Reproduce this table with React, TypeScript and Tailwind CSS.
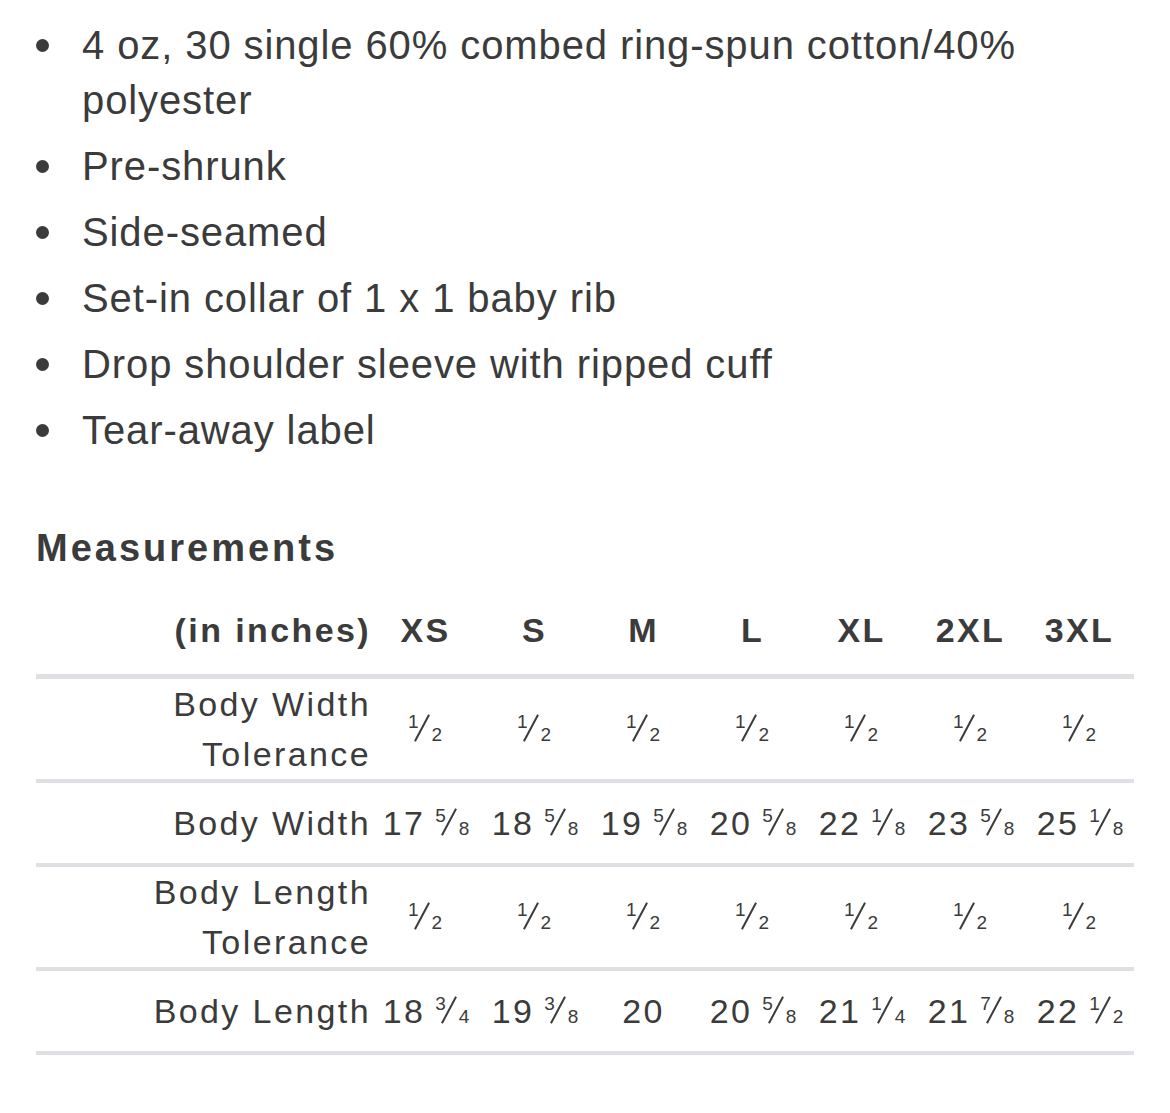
import React from "react";

const bullets = [
  "4 oz, 30 single 60% combed ring-spun cotton/40% polyester",
  "Pre-shrunk",
  "Side-seamed",
  "Set-in collar of 1 x 1 baby rib",
  "Drop shoulder sleeve with ripped cuff",
  "Tear-away label",
];

const sizes = ["XS", "S", "M", "L", "XL", "2XL", "3XL"];

type Val = { whole?: string; n?: string; d?: string };

const half: Val = { n: "1", d: "2" };

const rows: { label: string[]; values: Val[]; tall: boolean }[] = [
  {
    label: ["Body Width", "Tolerance"],
    values: [half, half, half, half, half, half, half],
    tall: true,
  },
  {
    label: ["Body Width"],
    values: [
      { whole: "17", n: "5", d: "8" },
      { whole: "18", n: "5", d: "8" },
      { whole: "19", n: "5", d: "8" },
      { whole: "20", n: "5", d: "8" },
      { whole: "22", n: "1", d: "8" },
      { whole: "23", n: "5", d: "8" },
      { whole: "25", n: "1", d: "8" },
    ],
    tall: false,
  },
  {
    label: ["Body Length", "Tolerance"],
    values: [half, half, half, half, half, half, half],
    tall: true,
  },
  {
    label: ["Body Length"],
    values: [
      { whole: "18", n: "3", d: "4" },
      { whole: "19", n: "3", d: "8" },
      { whole: "20" },
      { whole: "20", n: "5", d: "8" },
      { whole: "21", n: "1", d: "4" },
      { whole: "21", n: "7", d: "8" },
      { whole: "22", n: "1", d: "2" },
    ],
    tall: false,
  },
];

function Frac({ n, d }: { n: string; d: string }) {
  return (
    <span className="relative inline-block w-[31px] h-[26px] align-baseline tracking-normal">
      <span className="absolute left-[-2px] top-[-3px] text-[19px] leading-none">{n}</span>
      <span className="absolute left-[11px] top-[-2px] w-[2px] h-[30px] bg-[#3b3b3b] rotate-[28deg]" />
      <span className="absolute right-[-1px] bottom-[-3px] text-[19px] leading-none">{d}</span>
    </span>
  );
}

function Value({ v }: { v: Val }) {
  return (
    <span className="whitespace-nowrap">
      {v.whole}
      {v.whole && v.n ? " " : ""}
      {v.n && v.d ? <Frac n={v.n} d={v.d} /> : null}
    </span>
  );
}

export default function App() {
  return (
    <div
      className="w-full h-[1113px] bg-white px-[36px] text-[#3b3b3b] overflow-hidden"
      style={{ fontFamily: '"Liberation Sans", Arial, Helvetica, sans-serif' }}
    >
      <ul className="pt-[18px] flex flex-col gap-[11px]">
        {bullets.map((b) => (
          <li key={b} className="flex text-[40px] leading-[55px] tracking-[0.9px]">
            <span className="w-[46px] h-[55px] shrink-0 flex items-center">
              <span className="block w-[13px] h-[13px] rounded-full bg-[#3b3b3b]" />
            </span>
            <span>{b}</span>
          </li>
        ))}
      </ul>

      <h2 className="mt-[65px] h-[50px] leading-[50px] text-[38px] font-bold tracking-[3px]">
        Measurements
      </h2>

      <div className="mt-[21px] text-[34px] tracking-[2.4px]">
        <div className="grid grid-cols-[335px_repeat(7,1fr)] h-[85px] items-center pb-[8px] font-bold border-b-[5px] border-[#e0e0e4]">
          <div className="text-right leading-[50px]">(in inches)</div>
          {sizes.map((s) => (
            <div key={s} className="text-center leading-[50px]">
              {s}
            </div>
          ))}
        </div>
        {rows.map((r, i) => (
          <div
            key={i}
            className={
              "grid grid-cols-[335px_repeat(7,1fr)] items-center border-b-[4px] border-[#e0e0e4] " +
              (r.tall ? "h-[104px]" : "h-[84px]")
            }
          >
            <div className="text-right leading-[50px]">
              {r.label.map((l) => (
                <div key={l}>{l}</div>
              ))}
            </div>
            {r.values.map((v, j) => (
              <div key={j} className="text-center leading-[50px]">
                <Value v={v} />
              </div>
            ))}
          </div>
        ))}
      </div>
    </div>
  );
}
